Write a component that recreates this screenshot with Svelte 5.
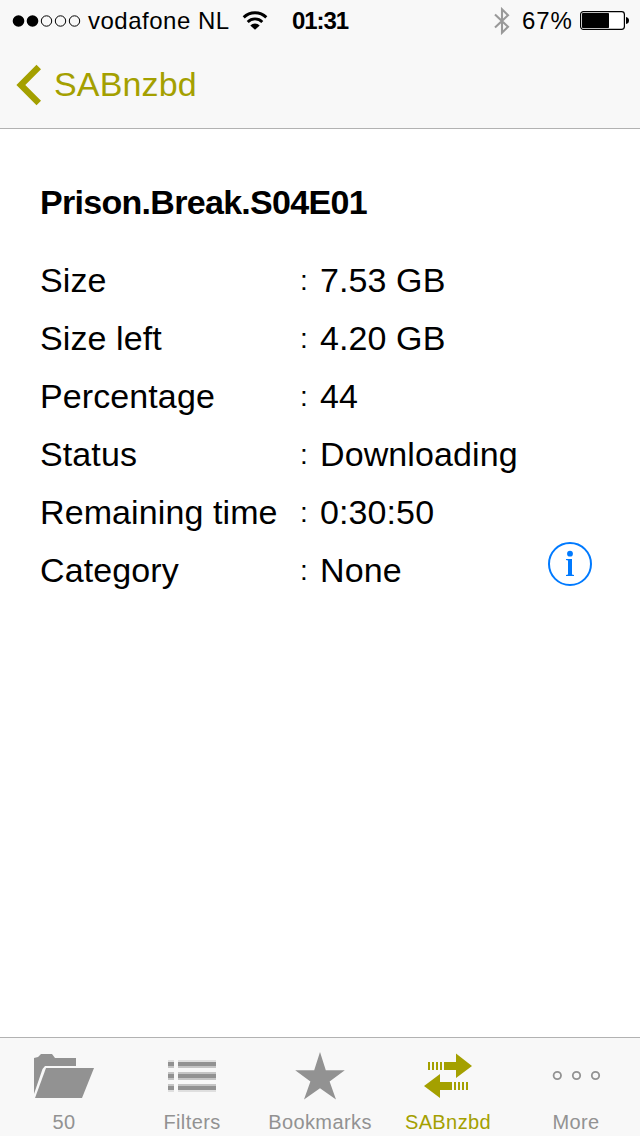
<script lang="ts">
    let title = "Prison.Break.S04E01";
    let signal = 2;
    let battery = 67;
    let active = "sabnzbd";

    const details = [
        { label: "Size", value: "7.53 GB" },
        { label: "Size left", value: "4.20 GB" },
        { label: "Percentage", value: "44" },
        { label: "Status", value: "Downloading" },
        { label: "Remaining time", value: "0:30:50" },
        { label: "Category", value: "None", info: true },
    ];

    const tabs = [
        { id: "folder", label: "50" },
        { id: "filters", label: "Filters" },
        { id: "bookmarks", label: "Bookmarks" },
        { id: "sabnzbd", label: "SABnzbd" },
        { id: "more", label: "More" },
    ];

    // soft edge above and below each line of the filter icon
    const filterLines = [
        { y: 26, above: 0.25, below: 0.5 },
        { y: 38, above: 0.5, below: 0.5 },
        { y: 50, above: 0.5, below: 0.25 },
    ];
</script>

<div class="screen">
    <header>
        <div class="status">
            <svg class="signal" width="70" height="14" viewBox="0 0 70 14">
                {#each [0, 1, 2, 3, 4] as i}
                    <circle
                        cx={6.5 + i * 14}
                        cy="7"
                        r={i < signal ? 5.8 : 5.2}
                        fill={i < signal ? "#000" : "none"}
                        stroke={i < signal ? "none" : "#000"}
                    />
                {/each}
            </svg>
            <span class="carrier">vodafone NL</span>
            <svg class="wifi" width="26" height="20" viewBox="0 0 26 20">
                <path d="M1.7 6.4a16 16 0 0 1 22.6 0" fill="none" stroke="#000" stroke-width="2.9" />
                <path d="M5.7 10.9a10.3 10.3 0 0 1 14.6 0" fill="none" stroke="#000" stroke-width="2.8" />
                <path d="M8.3 14.4a6.6 6.6 0 0 1 9.4 0L13 18.8z" />
            </svg>
            <span class="time">01:31</span>
            <svg class="bluetooth" width="18" height="28" viewBox="0 0 18 28">
                <path
                    d="M2 7.5l13 12.3-6 5.9V2.3l6 5.9L2 20.5"
                    fill="none"
                    stroke="#999"
                    stroke-width="2.1"
                />
            </svg>
            <span class="percent">{battery}%</span>
            <svg class="battery" width="50" height="20" viewBox="0 0 50 20">
                <rect x="0.6" y="0.6" width="43.8" height="17.8" rx="2.8" fill="#fff" stroke="#000" stroke-width="1.2" />
                <rect x="2" y="2" width={battery * 0.403} height="15" rx="0.8" />
                <path d="M46 6q3 .5 3 3.5t-3 3.5z" />
            </svg>
        </div>
        <button class="back">
            <svg width="26" height="42" viewBox="0 0 26 42">
                <path d="M20.5 .7L25 5.2 9.3 21 25 36.8 20.5 41.3.4 21z" fill="currentColor" />
            </svg>
            <span>SABnzbd</span>
        </button>
    </header>

    <main>
        <h1>{title}</h1>
        <dl>
            {#each details as detail}
                <div class="row">
                    <dt>{detail.label}</dt>
                    <span class="colon">:</span>
                    <dd>{detail.value}</dd>
                    {#if detail.info}
                        <button class="info" aria-label="Info">
                            <svg width="44" height="44" viewBox="0 0 44 44">
                                <circle cx="22" cy="22" r="21" fill="none" stroke="#007aff" stroke-width="2" />
                                <circle cx="22" cy="11.7" r="2.9" fill="#007aff" />
                                <path d="M18 17h6v15.5l2 .4V34h-8v-1.1l2-.4v-14l-2-.4z" fill="#007aff" />
                            </svg>
                        </button>
                    {/if}
                </div>
            {/each}
        </dl>
    </main>

    <nav>
        {#each tabs as tab}
            <button class="tab" class:active={tab.id == active}>
                <svg width="128" height="70" viewBox="0 0 128 70" fill="currentColor">
                    {#if tab.id == "folder"}
                        <path d="M34 56V20l4-1 3-3h11l3 4h21v8H45l-2.5 3z" />
                        <path d="M46 30h48L82 60H35z" />
                    {:else if tab.id == "filters"}
                        {#each filterLines as line}
                            {#each [{ x: 40, width: 6 }, { x: 50, width: 38 }] as part}
                                <rect x={part.x} y={line.y - 4} width={part.width} height="2" opacity={line.above} />
                                <rect x={part.x} y={line.y - 2} width={part.width} height="4" />
                                <rect x={part.x} y={line.y + 2} width={part.width} height="2" opacity={line.below} />
                            {/each}
                        {/each}
                    {:else if tab.id == "bookmarks"}
                        <path d="M64 14l5.8 18.3h19L73.6 43.4 80 61.5 64 50.3 48 61.5l6.4-18.1-15.2-11.1h19z" />
                    {:else if tab.id == "sabnzbd"}
                        {#each [0, 4, 8, 12] as x}
                            <rect x={44 + x} y="24" width="2" height="8" />
                            <rect x={70 + x} y="44" width="2" height="8" />
                        {/each}
                        <path d="M60 24h12v-8.5L88 28 72 40v-8H60z" />
                        <path d="M68 44H56v-8L40 48l16 12v-8h12z" />
                    {:else}
                        {#each [45.3, 64.5, 83.5] as x}
                            <circle cx={x} cy="37.5" r="3.7" fill="none" stroke="currentColor" stroke-width="1.8" />
                        {/each}
                    {/if}
                </svg>
                <span>{tab.label}</span>
            </button>
        {/each}
    </nav>
</div>

<style>
    :global(body) {
        margin: 0;
        background-color: #fff;
    }

    .screen {
        display: flex;
        flex-direction: column;
        width: 640px;
        height: 1136px;
        font-family: "Liberation Sans", Arial, sans-serif;
        color: #000;
    }

    svg {
        display: block;
        flex: none;
    }

    button {
        all: unset;
        cursor: pointer;
    }

    header {
        box-sizing: border-box;
        height: 129px;
        background-color: #f8f8f8;
        border-bottom: 1px solid #b2b2b2;
    }

    .status {
        display: flex;
        align-items: center;
        box-sizing: border-box;
        height: 41px;
        padding: 0 10px 0 12px;
        font-size: 24px;
        line-height: 41px;
        white-space: nowrap;
    }

    .carrier {
        width: 148px;
        margin-left: 6px;
        letter-spacing: 0.5px;
    }

    .wifi {
        margin-left: 6px;
    }

    .time {
        width: 58px;
        margin-left: 24px;
        font-weight: bold;
        letter-spacing: -1.1px;
    }

    .bluetooth {
        margin-left: auto;
    }

    .percent {
        width: 51px;
        margin: 0 7px 0 11px;
        letter-spacing: 0.9px;
    }

    .back {
        display: flex;
        align-items: center;
        height: 87px;
        padding-left: 16px;
        font-size: 34px;
        letter-spacing: 0.15px;
        color: #a4a000;
    }

    .back span {
        margin-left: 12px;
    }

    main {
        flex: 1;
        padding: 44px 40px 0;
    }

    h1 {
        margin: 0 0 20px;
        font-size: 34px;
        line-height: 58px;
        letter-spacing: -0.7px;
    }

    dl {
        margin: 0;
        font-size: 34px;
        line-height: 58px;
        letter-spacing: 0.1px;
    }

    .row {
        display: grid;
        grid-template-columns: 260px 20px 1fr auto;
        height: 58px;
    }

    dd {
        margin: 0;
    }

    .colon {
        padding-top: 1px;
        font-size: 28px;
    }

    .info {
        height: 44px;
        margin: 1px 8px 0 0;
    }

    nav {
        display: grid;
        grid-template-columns: repeat(5, 1fr);
        height: 98px;
        background-color: #f8f8f8;
        border-top: 1px solid #b2b2b2;
    }

    .tab {
        display: flex;
        flex-direction: column;
        align-items: center;
        color: #929292;
        font-size: 20px;
        line-height: 28px;
        letter-spacing: 0.4px;
    }

    .tab.active {
        color: #a4a000;
    }
</style>
